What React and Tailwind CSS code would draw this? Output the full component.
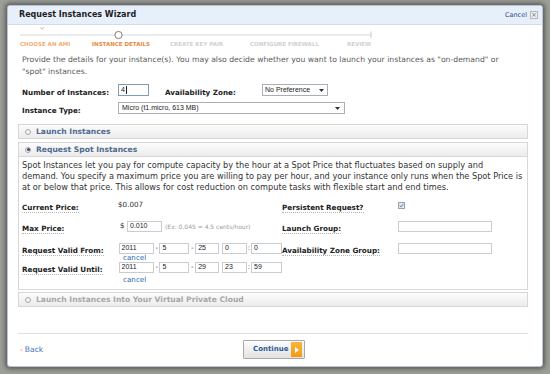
import React from "react";

function Label({ children, className = "" }) {
  return (
    <span
      className={
        "font-bold text-[7.2px] leading-[9px] text-[#222] border-b border-dotted border-[#b5b5b5] whitespace-nowrap " +
        className
      }
    >
      {children}
    </span>
  );
}

function Box({ children, className = "" }) {
  return (
    <div
      className={
        "h-[11px] bg-white border border-[#c9ccd1] flex items-center pl-[2px] font-['Liberation_Sans',sans-serif] text-[7px] text-[#222] " +
        className
      }
    >
      {children}
    </div>
  );
}

function Arrow() {
  return (
    <svg width="5" height="3" viewBox="0 0 5 3" className="shrink-0">
      <path d="M0 0 L5 0 L2.5 3 Z" fill="#333" />
    </svg>
  );
}

function Radio({ selected }) {
  return (
    <span className="w-[6px] h-[6px] rounded-full border border-[#a7a7a7] bg-[#f4f4f4] flex items-center justify-center shrink-0">
      {selected ? <span className="w-[3px] h-[3px] rounded-full bg-[#3a4f6e]" /> : null}
    </span>
  );
}

function SectionHeader({ label, selected, disabled, className = "" }) {
  return (
    <div
      className={
        "h-[15px] border border-[#d7d7d7] bg-linear-to-b from-[#fcfcfc] to-[#ececec] flex items-center pl-[6px] gap-[5px] " +
        className
      }
    >
      <Radio selected={selected} />
      <span
        className={
          "text-[7.6px] font-bold leading-[9px] " +
          (disabled ? "text-[#a8a8a8]" : "text-[#4f6a8f]")
        }
      >
        {label}
      </span>
    </div>
  );
}

export default function App() {
  return (
    <div className="w-[550px] h-[374px] bg-[#9c9e98] pt-[5px] pl-[7px] overflow-hidden font-['DejaVu_Sans',sans-serif]">
      <div className="w-[536px] h-[362px] bg-white rounded-[3px] border border-[#b9c5d3] shadow-[0_0_4px_2px_rgba(40,40,40,0.55)] overflow-hidden flex flex-col">
        {/* header */}
        <div className="h-[19px] shrink-0 bg-[#e7effa] border-b border-[#d3dceb] flex items-center justify-between pl-[11px] pr-[4px]">
          <span className="text-[8px] font-bold text-[#1e1e1e] leading-[10px]">Request Instances Wizard</span>
          <div className="flex items-center gap-[3px]">
            <span className="text-[6.5px] text-[#2c4a8c] leading-[8px]">Cancel</span>
            <span className="w-[8px] h-[8px] border border-[#b8b8b8] bg-[#f0f0f0] text-[7px] leading-[6px] text-[#777] flex items-center justify-center">×</span>
          </div>
        </div>

        {/* progress */}
        <svg width="370" height="15" viewBox="0 0 370 15" className="shrink-0 block">
          <defs>
            <linearGradient id="og" x1="0" x2="1" y1="0" y2="0">
              <stop offset="0" stopColor="#f8d2a8" />
              <stop offset="0.7" stopColor="#f5b070" />
              <stop offset="1" stopColor="#f08c30" />
            </linearGradient>
          </defs>
          <line x1="12" y1="10" x2="363" y2="10" stroke="#d8d8d8" strokeWidth="1" />
          <line x1="12" y1="10" x2="107" y2="10" stroke="url(#og)" strokeWidth="1.4" />
          <line x1="363" y1="6.5" x2="363" y2="13" stroke="#c8c8c8" strokeWidth="1" />
          <circle cx="110.5" cy="10" r="3.6" fill="#fff" stroke="#6f6f6f" strokeWidth="0.9" />
          <path d="M32.3 2.4 L34 4.4 L36 2" fill="none" stroke="#f2a55c" strokeWidth="0.9" />
        </svg>
        <div className="h-[8px] shrink-0 flex items-center pl-[12px] text-[5.5px] font-bold leading-[7px] whitespace-nowrap">
          <span className="w-[72px] text-[#f4ad74]">CHOOSE AN AMI</span>
          <span className="w-[78px] text-[#ea8a3c]">INSTANCE DETAILS</span>
          <span className="w-[80px] text-[#d0d0d0]">CREATE KEY PAIR</span>
          <span className="w-[97px] text-[#d0d0d0]">CONFIGURE FIREWALL</span>
          <span className="text-[#d0d0d0]">REVIEW</span>
        </div>

        {/* body */}
        <div className="pl-[10px] w-[520px]">
          <p className="mt-[6px] pl-[4px] text-[7.7px] leading-[11.5px] text-[#5a5a5a] w-[505px] whitespace-nowrap">
            Provide the details for your instance(s). You may also decide whether you want to launch your instances as "on-demand" or
            <br />
            "spot" instances.
          </p>

          <div className="mt-[7px] h-[12px] flex items-center pl-[4px]">
            <div className="w-[96px]"><Label className="border-b-0">Number of Instances:</Label></div>
            <div className="w-[31px] h-[12px] border border-[#7f9db9] flex items-center pl-[2px] font-['Liberation_Sans',sans-serif] text-[7px] text-[#222]">
              4<span className="w-[1px] h-[8px] bg-[#222] ml-[1px]" />
            </div>
            <div className="w-[97px] ml-[16px]"><Label className="border-b-0">Availability Zone:</Label></div>
            <div className="w-[66px] h-[12px] border border-[#a9afb8] flex items-center justify-between pl-[2px] pr-[3px] font-['Liberation_Sans',sans-serif] text-[7px] text-[#222]">
              No Preference <Arrow />
            </div>
          </div>

          <div className="mt-[6px] h-[12px] flex items-center pl-[4px]">
            <div className="w-[96px]"><Label className="border-b-0">Instance Type:</Label></div>
            <div className="w-[227px] h-[12px] border border-[#a9afb8] flex items-center justify-between pl-[3px] pr-[4px] font-['Liberation_Sans',sans-serif] text-[7px] text-[#222]">
              Micro (t1.micro, 613 MB) <Arrow />
            </div>
          </div>

          {/* sections */}
          <div className="mt-[10px] w-[510px]">
            <SectionHeader label="Launch Instances" />
            <SectionHeader label="Request Spot Instances" selected className="mt-[3px]" />
            <div className="h-[133px] border border-t-0 border-[#d7d7d7] pl-[3px] pt-[2.5px]">
              <p className="text-[8.2px] leading-[11px] text-[#333] whitespace-nowrap">
                Spot Instances let you pay for compute capacity by the hour at a Spot Price that fluctuates based on supply and
                <br />
                demand. You specify a maximum price you are willing to pay per hour, and your instance only runs when the Spot Price is
                <br />
                at or below that price. This allows for cost reduction on compute tasks with flexible start and end times.
              </p>

              {/* Row A */}
              <div className="mt-[6.5px] h-[12px] flex items-center">
                <div className="w-[260px] flex items-center">
                  <div className="w-[96px]"><Label>Current Price:</Label></div>
                  <span className="text-[7.2px] text-[#333]">$0.007</span>
                </div>
                <div className="w-[116px]"><Label>Persistent Request?</Label></div>
                <span className="w-[7px] h-[7px] border border-[#9aa2ad] bg-[#e4e7ee] flex items-center justify-center">
                  <svg width="5" height="5" viewBox="0 0 5 5">
                    <path d="M0.7 2.6 L2 3.9 L4.4 0.8" fill="none" stroke="#5b74a6" strokeWidth="0.9" />
                  </svg>
                </span>
              </div>

              {/* Row B */}
              <div className="mt-[9px] h-[12px] flex items-center">
                <div className="w-[260px] flex items-center">
                  <div className="w-[98px]"><Label>Max Price:</Label></div>
                  <span className="text-[7.2px] text-[#333] w-[7px]">$</span>
                  <Box className="w-[35px]">0.010</Box>
                  <span className="ml-[3px] text-[6px] text-[#9a9a9a] whitespace-nowrap">(Ex: 0.045 = 4.5 cents/hour)</span>
                </div>
                <div className="w-[116px]"><Label>Launch Group:</Label></div>
                <Box className="w-[94px]" />
              </div>

              {/* Row C */}
              <div className="mt-[10px] h-[12px] flex items-center">
                <div className="w-[260px] flex items-center">
                  <div className="w-[97px]"><Label>Request Valid From:</Label></div>
                  <Box className="w-[36px]">2011</Box>
                  <span className="text-[7px] text-[#333] w-[5px] text-center">-</span>
                  <Box className="w-[30px]">5</Box>
                  <span className="text-[7px] text-[#333] w-[6px] text-center">-</span>
                  <Box className="w-[24px]">25</Box>
                  <span className="w-[3px]" />
                  <Box className="w-[25px]">0</Box>
                  <span className="text-[7px] text-[#333] w-[4px] text-center">:</span>
                  <Box className="w-[31px] shrink-0">0</Box>
                </div>
                <div className="w-[116px]"><Label>Availability Zone Group:</Label></div>
                <Box className="w-[94px]" />
              </div>
              <div className="h-[7px] flex items-center pl-[101px]">
                <span className="text-[7.2px] leading-[8px] text-[#2f6ab0]">cancel</span>
              </div>

              {/* Row D */}
              <div className="h-[12px] flex items-center">
                <div className="w-[260px] flex items-center">
                  <div className="w-[97px]"><Label>Request Valid Until:</Label></div>
                  <Box className="w-[36px]">2011</Box>
                  <span className="text-[7px] text-[#333] w-[5px] text-center">-</span>
                  <Box className="w-[30px]">5</Box>
                  <span className="text-[7px] text-[#333] w-[6px] text-center">-</span>
                  <Box className="w-[24px]">29</Box>
                  <span className="w-[3px]" />
                  <Box className="w-[25px]">23</Box>
                  <span className="text-[7px] text-[#333] w-[4px] text-center">:</span>
                  <Box className="w-[31px] shrink-0">59</Box>
                </div>
              </div>
              <div className="mt-[3px] h-[8px] flex items-center pl-[101px]">
                <span className="text-[7.2px] leading-[8px] text-[#2f6ab0]">cancel</span>
              </div>
            </div>
            <SectionHeader label="Launch Instances Into Your Virtual Private Cloud" disabled className="mt-[2px]" />
          </div>

          {/* footer */}
          <div className="mt-[26px] w-[510px] border-t border-[#dedede] pt-[6px] flex items-start">
            <div className="w-[225px] h-[19px] flex items-center pl-[2px] gap-[2px]">
              <span className="text-[7px] text-[#f0a060] leading-[8px]">‹</span>
              <span className="text-[7.6px] text-[#3a72b8] leading-[9px]">Back</span>
            </div>
            <div className="w-[62px] h-[19px] border border-[#a9a9a9] rounded-[1px] bg-linear-to-b from-[#fdfdfd] to-[#e2e2e2] flex items-center justify-between pl-[9px] pr-[2px]">
              <span className="text-[7px] font-bold text-[#2c5a9c] leading-[9px]">Continue</span>
              <span className="w-[11px] h-[15px] bg-linear-to-b from-[#fbb43a] to-[#f39a12] flex items-center justify-center">
                <svg width="4" height="6" viewBox="0 0 4 6">
                  <path d="M0 0 L4 3 L0 6 Z" fill="#fff" />
                </svg>
              </span>
            </div>
          </div>
        </div>
      </div>
    </div>
  );
}
